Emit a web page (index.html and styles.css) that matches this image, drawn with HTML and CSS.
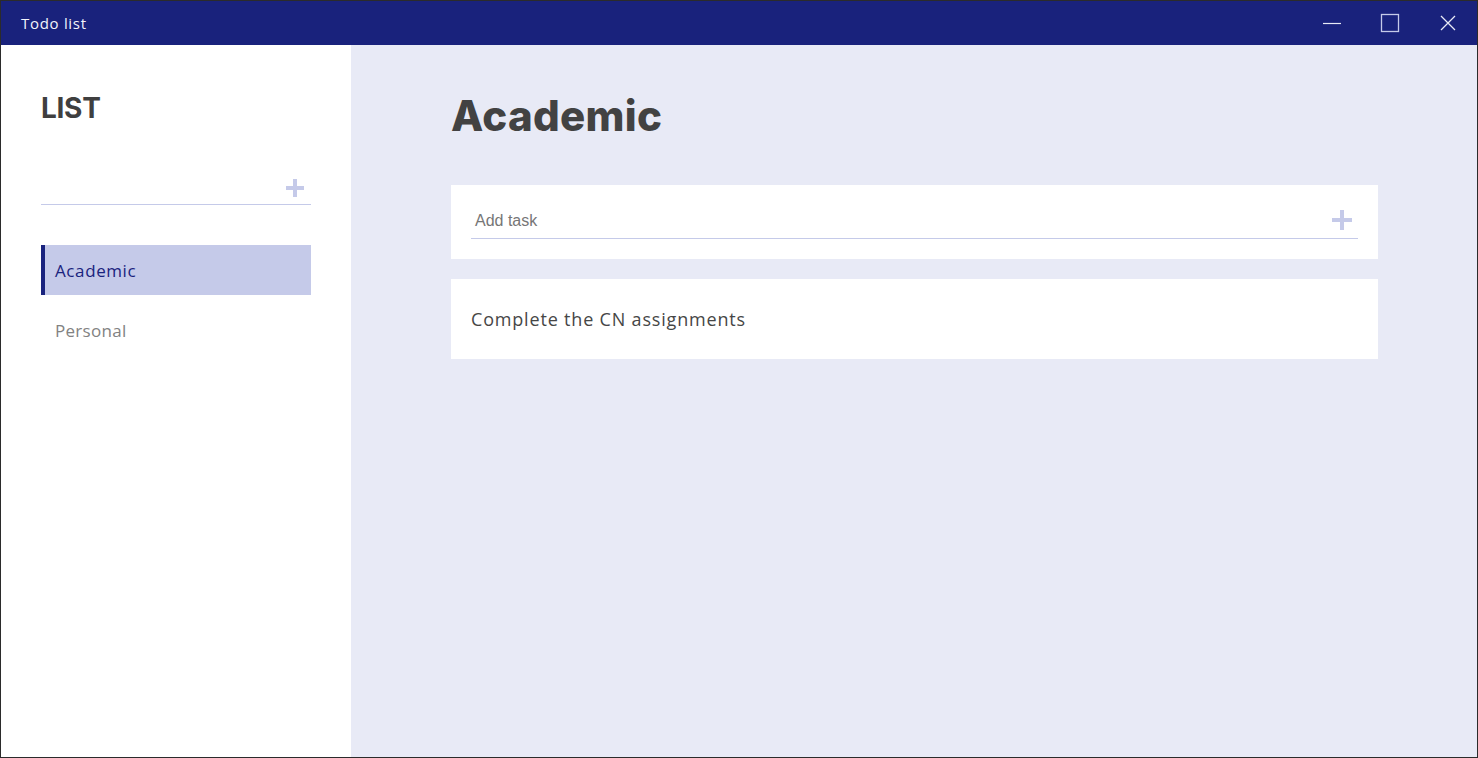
FILE: index.html
```html
<!DOCTYPE html>
<html lang="en">
<head>
<meta charset="utf-8">
<title>Todo list</title>
<link rel="stylesheet" href="styles.css">
</head>
<body>
<div class="window">
  <header class="titlebar">
    <span class="title">Todo list</span>
    <div class="controls">
      <span class="ctl">
        <svg width="20" height="20" viewBox="0 0 20 20"><path d="M1 10.5h18" stroke="#e8eaf6" stroke-width="1.2" fill="none"/></svg>
      </span>
      <span class="ctl">
        <svg width="20" height="20" viewBox="0 0 20 20"><rect x="1.5" y="1.5" width="17" height="17" stroke="#c5cae9" stroke-width="1.3" fill="none"/></svg>
      </span>
      <span class="ctl">
        <svg width="20" height="20" viewBox="0 0 20 20"><path d="M3 3L17 17M17 3L3 17" stroke="#e8eaf6" stroke-width="1.3" fill="none"/></svg>
      </span>
    </div>
  </header>
  <div class="body">
    <aside class="sidebar">
      <h2 class="side-title">LIST</h2>
      <div class="side-input">
        <span class="plus small"></span>
      </div>
      <nav class="lists">
        <div class="list-item active">Academic</div>
        <div class="list-item">Personal</div>
      </nav>
    </aside>
    <main class="main">
      <h1 class="heading">Academic</h1>
      <div class="card add-card">
        <div class="add-field">
          <span class="placeholder">Add task</span>
          <span class="plus"></span>
        </div>
      </div>
      <div class="card task-card">
        <span class="task-text">Complete the CN assignments</span>
      </div>
    </main>
  </div>
</div>
</body>
</html>
```
FILE: styles.css
```css
html, body {
  margin: 0;
  padding: 0;
  height: 100%;
  overflow: hidden;
}
body {
  font-family: "Open Sans", "Liberation Sans", sans-serif;
  background: #2b2b2b;
}
.window {
  box-sizing: border-box;
  width: 1478px;
  height: 758px;
  border: 1px solid #2b2b2b;
  display: flex;
  flex-direction: column;
}
.titlebar {
  height: 44px;
  background: #19227c;
  display: flex;
  align-items: center;
  justify-content: space-between;
  flex-shrink: 0;
}
.title {
  color: #f3f4fb;
  font-size: 15px;
  padding-left: 20px;
  letter-spacing: 0.7px;
}
.controls {
  display: flex;
  height: 100%;
  align-items: center;
}
.ctl {
  width: 58px;
  height: 44px;
  display: flex;
  align-items: center;
  justify-content: center;
}
.ctl svg { display: block; }
.body {
  flex: 1;
  display: flex;
  min-height: 0;
}
.sidebar {
  width: 350px;
  background: #ffffff;
  box-sizing: border-box;
  padding: 0 40px;
  flex-shrink: 0;
}
.side-title {
  margin: 46px 0 0;
  font-family: "Inter", sans-serif;
  font-weight: 700;
  font-size: 28px;
  color: #3f3f3f;
  line-height: 34px;
  letter-spacing: -0.3px;
}
.side-input {
  margin-top: 46px;
  height: 33px;
  border-bottom: 1px solid #c5cae9;
  display: flex;
  justify-content: flex-end;
  align-items: center;
  padding-right: 7px;
}
.plus {
  position: relative;
  width: 20px;
  height: 20px;
  display: inline-block;
  flex-shrink: 0;
}
.plus::before, .plus::after {
  content: "";
  position: absolute;
  background: #c5cae9;
}
.plus::before {
  left: 0;
  right: 0;
  top: 8px;
  height: 4px;
}
.plus::after {
  top: 0;
  bottom: 0;
  left: 8px;
  width: 4px;
}
.plus.small {
  width: 18px;
  height: 18px;
}
.plus.small::before { top: 7px; }
.plus.small::after { left: 7px; }
.lists {
  margin-top: 40px;
  display: flex;
  flex-direction: column;
  gap: 10px;
}
.list-item {
  height: 50px;
  display: flex;
  align-items: center;
  padding-left: 14px;
  font-size: 17px;
  color: #828282;
  letter-spacing: 0.3px;
}
.list-item.active {
  background: #c5cae9;
  border-left: 4px solid #1a237e;
  padding-left: 10px;
  color: #1a237e;
  letter-spacing: 0.6px;
}
.main {
  flex: 1;
  background: #e8eaf6;
  padding: 0 99px 0 100px;
}
.heading {
  margin: 46px 0 0;
  font-family: "Inter", sans-serif;
  font-weight: 800;
  font-size: 42px;
  line-height: 50px;
  color: #424242;
  letter-spacing: 0.3px;
}
.card {
  background: #ffffff;
  box-sizing: border-box;
}
.add-card {
  margin-top: 44px;
  height: 74px;
  padding: 0 20px;
  display: flex;
  align-items: flex-end;
}
.add-field {
  flex: 1;
  height: 45px;
  margin-bottom: 20px;
  border-bottom: 1px solid #c5cae9;
  display: flex;
  align-items: flex-end;
  justify-content: space-between;
  padding: 0 6px 8px 4px;
  box-sizing: border-box;
}
.placeholder {
  font-family: "Liberation Sans", Arial, sans-serif;
  font-size: 16px;
  line-height: 18px;
  color: #767676;
}
.task-card {
  margin-top: 20px;
  height: 80px;
  padding: 0 20px;
  display: flex;
  align-items: center;
}
.task-text {
  font-size: 18px;
  color: #464646;
  letter-spacing: 0.82px;
}
```
